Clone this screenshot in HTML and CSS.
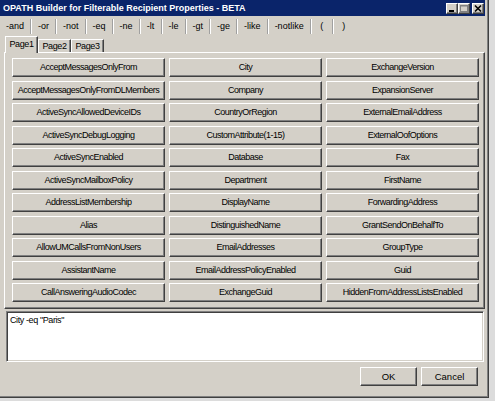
FILE: index.html
```html
<!DOCTYPE html>
<html>
<head>
<meta charset="utf-8">
<link rel="stylesheet" href="styles.css">
</head>
<body>
<div class="window">
  <div class="titlebar">
    <span class="title">OPATH Builder for Filterable Recipient Properties - BETA</span>
    <div class="caption-buttons">
      <div class="cbtn"><svg width="10" height="9" viewBox="0 0 10 9"><rect x="2" y="6" width="5" height="2" fill="#000"/></svg></div>
      <div class="cbtn"><svg width="10" height="9" viewBox="0 0 10 9"><rect x="1.5" y="1.5" width="7" height="6" fill="none" stroke="#808080"/><rect x="1" y="1" width="8" height="1.5" fill="#808080"/></svg></div>
      <div class="cbtn close"><svg width="10" height="9" viewBox="0 0 10 9"><path d="M2 1.5 L8 7.5 M8 1.5 L2 7.5" stroke="#000" stroke-width="1.6"/></svg></div>
    </div>
  </div>
  <div class="toolbar">
    <span class="tb">-and</span><span class="sep"></span>
    <span class="tb">-or</span><span class="sep"></span>
    <span class="tb">-not</span><span class="sep"></span>
    <span class="tb">-eq</span><span class="sep"></span>
    <span class="tb">-ne</span><span class="sep"></span>
    <span class="tb">-lt</span><span class="sep"></span>
    <span class="tb">-le</span><span class="sep"></span>
    <span class="tb">-gt</span><span class="sep"></span>
    <span class="tb">-ge</span><span class="sep"></span>
    <span class="tb">-like</span><span class="sep"></span>
    <span class="tb">-notlike</span><span class="sep"></span>
    <span class="tb">(</span><span class="sep"></span>
    <span class="tb">)</span>
  </div>
  <div class="tabs">
    <div class="tab selected">Page1</div>
    <div class="tab">Page2</div>
    <div class="tab">Page3</div>
  </div>
  <div class="panel">
    <div class="grid">
      <div class="btn">AcceptMessagesOnlyFrom</div>
      <div class="btn">AcceptMessagesOnlyFromDLMembers</div>
      <div class="btn">ActiveSyncAllowedDeviceIDs</div>
      <div class="btn">ActiveSyncDebugLogging</div>
      <div class="btn">ActiveSyncEnabled</div>
      <div class="btn">ActiveSyncMailboxPolicy</div>
      <div class="btn">AddressListMembership</div>
      <div class="btn">Alias</div>
      <div class="btn">AllowUMCallsFromNonUsers</div>
      <div class="btn">AssistantName</div>
      <div class="btn">CallAnsweringAudioCodec</div>
      <div class="btn">City</div>
      <div class="btn">Company</div>
      <div class="btn">CountryOrRegion</div>
      <div class="btn">CustomAttribute(1-15)</div>
      <div class="btn">Database</div>
      <div class="btn">Department</div>
      <div class="btn">DisplayName</div>
      <div class="btn">DistinguishedName</div>
      <div class="btn">EmailAddresses</div>
      <div class="btn">EmailAddressPolicyEnabled</div>
      <div class="btn">ExchangeGuid</div>
      <div class="btn">ExchangeVersion</div>
      <div class="btn">ExpansionServer</div>
      <div class="btn">ExternalEmailAddress</div>
      <div class="btn">ExternalOofOptions</div>
      <div class="btn">Fax</div>
      <div class="btn">FirstName</div>
      <div class="btn">ForwardingAddress</div>
      <div class="btn">GrantSendOnBehalfTo</div>
      <div class="btn">GroupType</div>
      <div class="btn">Guid</div>
      <div class="btn">HiddenFromAddressListsEnabled</div>
    </div>
  </div>
  <div class="textbox">City -eq "Paris"</div>
  <div class="footer">
    <div class="btn dlg">OK</div>
    <div class="btn dlg">Cancel</div>
  </div>
</div>
</body>
</html>
```
FILE: styles.css
```css
* { box-sizing: border-box; }
html, body { margin: 0; padding: 0; }
body {
  background: #dcdcdc;
  width: 495px;
  height: 401px;
  overflow: hidden;
  font-family: "Liberation Sans", Arial, sans-serif;
  font-size: 9px;
  color: #000;
}
.window {
  width: 489px;
  height: 398px;
  background: #d4d0c8;
  padding: 0 3px 3px 0;
  border-right: 1px solid #404040;
  border-bottom: 1px solid #404040;
  box-shadow: inset -1px -1px 0 #808080;
}
.titlebar {
  height: 16px;
  background: #0a246a;
  display: flex;
  align-items: center;
  justify-content: space-between;
  padding: 0 1px 0 3px;
}
.title {
  color: #fff;
  font-weight: bold;
  font-size: 9px;
  line-height: 16px;
  white-space: nowrap;
}
.caption-buttons {
  display: flex;
  align-items: center;
}
.cbtn {
  width: 12px;
  height: 11px;
  background: #d4d0c8;
  border-top: 1px solid #fff;
  border-left: 1px solid #fff;
  border-right: 1px solid #404040;
  border-bottom: 1px solid #404040;
  box-shadow: inset -1px -1px 0 #808080;
  display: flex;
  align-items: center;
  justify-content: center;
}
.cbtn svg { display: block; }
.cbtn.close { margin-left: 2px; }
.toolbar {
  height: 20px;
  display: flex;
  align-items: center;
  padding-left: 0;
}
.tb {
  padding: 0 6px;
  min-width: 20px;
  text-align: center;
  line-height: 20px;
  white-space: nowrap;
}
.sep {
  width: 2px;
  height: 15px;
  border-left: 1px solid #a0a0a0;
  border-right: 1px solid #fff;
}
.tabs {
  height: 16px;
  display: flex;
  align-items: flex-end;
  padding-left: 5px;
  position: relative;
  z-index: 1;
}
.tab {
  width: 33px;
  height: 13px;
  text-align: center;
  line-height: 12px;
  letter-spacing: -0.4px;
  border-top: 1px solid #fff;
  border-left: 1px solid #fff;
  border-right: 1px solid #404040;
  box-shadow: inset -1px 0 0 #808080;
  background: #d4d0c8;
}
.tab.selected {
  height: 17px;
  margin-bottom: -1px;
  line-height: 15px;
}
.panel {
  margin-left: 4px;
  width: 481px;
  border-top: 1px solid #fff;
  border-left: 1px solid #fff;
  border-right: 1px solid #404040;
  border-bottom: 1px solid #404040;
  box-shadow: inset -1px -1px 0 #808080;
  padding: 5px 4px 6px 7px;
}
.grid {
  display: grid;
  grid-auto-flow: column;
  grid-template-columns: repeat(3, 153px);
  grid-template-rows: repeat(11, 19px);
  column-gap: 4px;
  row-gap: 3.5px;
}
.btn {
  background: #d4d0c8;
  border-top: 1px solid #fff;
  border-left: 1px solid #fff;
  border-right: 1px solid #404040;
  border-bottom: 1px solid #404040;
  box-shadow: inset -1px -1px 0 #808080;
  display: flex;
  align-items: center;
  justify-content: center;
  white-space: nowrap;
  letter-spacing: -0.5px;
  padding-bottom: 1px;
}
.textbox {
  margin: 2px 0 0 6px;
  width: 478px;
  height: 51px;
  background: #fff;
  border-top: 1px solid #808080;
  border-left: 1px solid #808080;
  border-right: 1px solid #fff;
  border-bottom: 1px solid #fff;
  box-shadow: inset 1px 1px 0 #404040, inset -1px -1px 0 #d4d0c8;
  padding: 3px 3px;
  letter-spacing: -0.4px;
  line-height: 11px;
}
.footer {
  display: flex;
  justify-content: flex-end;
  gap: 4px;
  margin-top: 5px;
  padding-right: 7px;
}
.btn.dlg {
  width: 57px;
  height: 19px;
  font-size: 9.5px;
  letter-spacing: 0;
}
```
